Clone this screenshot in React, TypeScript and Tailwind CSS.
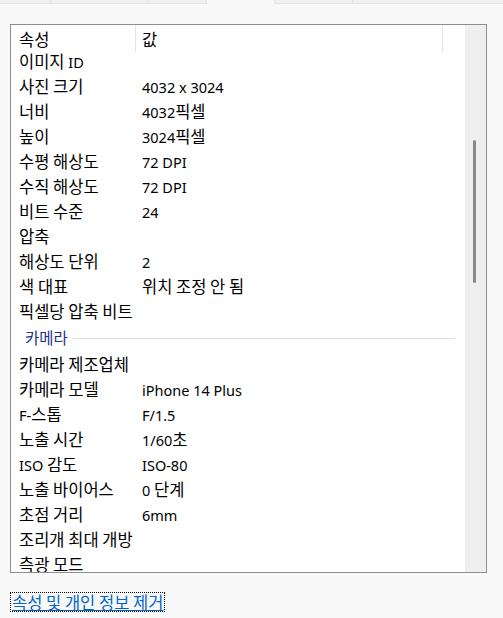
import React from "react";

const rowsA: [string, string][] = [
  ["이미지 ID", ""],
  ["사진 크기", "4032 x 3024"],
  ["너비", "4032픽셀"],
  ["높이", "3024픽셀"],
  ["수평 해상도", "72 DPI"],
  ["수직 해상도", "72 DPI"],
  ["비트 수준", "24"],
  ["압축", ""],
  ["해상도 단위", "2"],
  ["색 대표", "위치 조정 안 됨"],
  ["픽셀당 압축 비트", ""],
];

const rowsB: [string, string][] = [
  ["카메라 제조업체", ""],
  ["카메라 모델", "iPhone 14 Plus"],
  ["F-스톱", "F/1.5"],
  ["노출 시간", "1/60초"],
  ["ISO 감도", "ISO-80"],
  ["노출 바이어스", "0 단계"],
  ["초점 거리", "6mm"],
  ["조리개 최대 개방", ""],
  ["측광 모드", ""],
];

const latinFont = { fontFamily: '"Noto Sans", "Open Sans", sans-serif' };

function Mixed({ text }: { text: string }) {
  const parts = text.split(/([!-~]+(?: [!-~]+)*)/).filter((p) => p !== "");
  return (
    <>
      {parts.map((p, i) =>
        /^[!-~]/.test(p) ? (
          <span key={i} className="text-[14.5px]" style={latinFont}>
            {p}
          </span>
        ) : (
          <span key={i}>{p}</span>
        )
      )}
    </>
  );
}

function Row({ name, value }: { name: string; value: string }) {
  return (
    <div className="flex h-[25px] shrink-0 items-center leading-none">
      <div className="w-[124px] shrink-0 whitespace-nowrap pl-[8px]">
        <Mixed text={name} />
      </div>
      <div className="whitespace-nowrap pl-[7px]">
        <Mixed text={value} />
      </div>
    </div>
  );
}

export default function App() {
  return (
    <div
      className="flex h-[618px] w-[503px] flex-col overflow-hidden bg-[#f9f9f9] text-[16.5px] text-[#000000]"
      style={{ fontFamily: '"Noto Sans CJK KR", "Noto Sans", sans-serif' }}
    >
      {/* tab strip */}
      <div className="flex h-[4px] shrink-0">
        <div className="w-[51px] border-b border-r border-[#e3e3e3] bg-[#f0f0f0]" />
        <div className="w-[98px] border-b border-r border-[#e3e3e3] bg-[#f0f0f0]" />
        <div className="w-[58px] border-b border-r border-[#e3e3e3] bg-[#f0f0f0]" />
        <div className="w-[67px] bg-[#f9f9f9]" />
        <div className="w-[79px] border-b border-l border-r border-[#e3e3e3] bg-[#f0f0f0]" />
        <div className="flex-1 border-b border-[#e3e3e3] bg-[#f0f0f0]" />
      </div>

      {/* list box */}
      <div className="ml-[10px] mt-[20px] flex h-[549px] w-[477px] shrink-0 border border-[#8a8e96] bg-white">
        <div className="flex flex-1 flex-col overflow-hidden">
          {/* header */}
          <div className="flex h-[24px] shrink-0 items-start">
            <div className="w-[124px] shrink-0 pl-[8px] pt-[6px] leading-none">속성</div>
            <div className="h-[27px] w-px shrink-0 bg-[#e5e5e5]" />
            <div className="w-[306px] shrink-0 pl-[6px] pt-[6px] leading-none">값</div>
            <div className="h-[27px] w-px shrink-0 bg-[#e5e5e5]" />
          </div>
          {rowsA.map(([n, v]) => (
            <Row key={n} name={n} value={v} />
          ))}
          {/* group */}
          <div className="flex h-[28px] shrink-0 items-center pl-[14px] pr-[10px]">
            <span className="text-[15.5px] leading-none text-[#1e3287]">카메라</span>
            <div className="ml-[5px] mt-[1px] h-px flex-1 bg-[#d6dee7]" />
          </div>
          {rowsB.map(([n, v]) => (
            <Row key={n} name={n} value={v} />
          ))}
        </div>
        {/* scrollbar */}
        <div className="flex w-[21px] shrink-0 flex-col bg-[#efefef] pl-[8px]">
          <div className="mt-[115px] h-[143px] w-[3px] rounded-full bg-[#8a8a8a]" />
        </div>
      </div>

      {/* link */}
      <div className="ml-[10px] mt-[17px]">
        <span className="inline-block border border-dotted border-[#000000] px-px text-[16.5px] leading-[18px] text-[#0066cc] underline">
          속성 및 개인 정보 제거
        </span>
      </div>
    </div>
  );
}
